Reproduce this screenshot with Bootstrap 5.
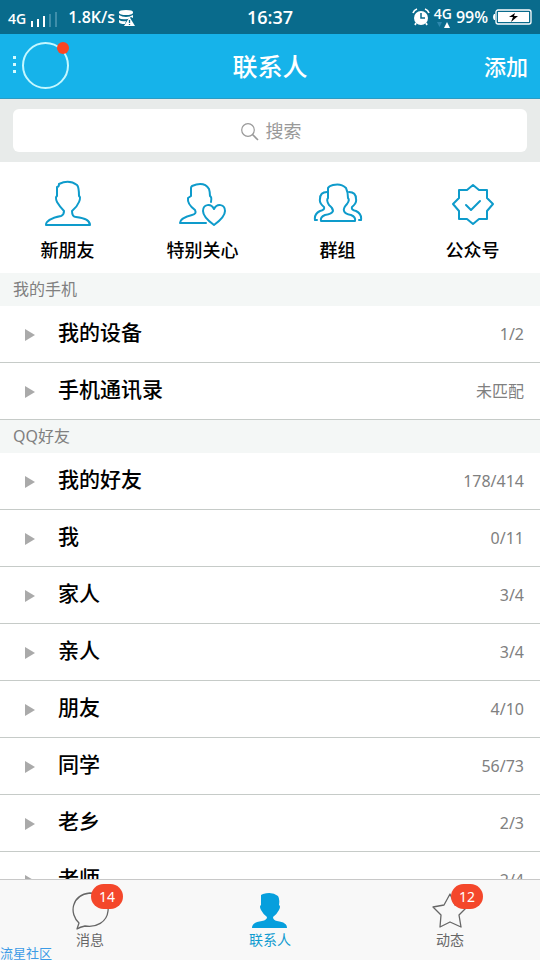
<!DOCTYPE html>
<html lang="zh-CN">
<head>
<meta charset="utf-8">
<meta name="viewport" content="width=device-width, initial-scale=1">
<title>联系人</title>
<link href="https://cdn.jsdelivr.net/npm/bootstrap@5.3.0/dist/css/bootstrap.min.css" rel="stylesheet">
<style>
  :root { --sky: #16b3ea; --line: #0e9bcb; --ink-soft: #808080; }
  body { font-family: "Noto Sans", "Noto Sans CJK SC", sans-serif; background: #fff; color: #000; }
  svg { display: block; flex: none; }
  .status-bar { background: #096b8c; height: 34px; font-family: "Open Sans", "Noto Sans", sans-serif; font-weight: 600; font-size: 16px; line-height: 24px; }
  .status-side { flex: 1 1 0; }
  .status-small { font-size: 14px; line-height: 16px; }
  .status-clock { font-size: 18px; }
  .title-bar { background: var(--sky); height: 65px; border-bottom: 1px solid #2b9cc4; padding: 0 12px; }
  .title-side { flex: 1 1 0; }
  .title-bar h1 { font-size: 25px; line-height: 36px; font-weight: 500; }
  .add-btn { font-size: 22px; line-height: 32px; font-weight: 500; }
  .search-strip { background: #e8ebea; padding: 10px 13px; }
  .search-field, .search-field:focus { height: 43px; border: 0; border-radius: 6px; font-size: 18px; padding: 0 0 0 43px; color: #666; background: #fff; }
  .search-field::placeholder { color: #999; opacity: 1; }
  .search-icon { left: calc(50% - 29px); top: 14px; }
  .shortcuts { height: 111px; padding-top: 15px; }
  .shortcuts a { font-size: 18px; line-height: 26px; font-weight: 500; }
  .shortcuts svg { fill: none; stroke: var(--line); stroke-width: 2; stroke-linejoin: round; stroke-linecap: round; }
  .section-title { background: #f4f7f6; color: var(--ink-soft); height: 33px; font-size: 16px; line-height: 33px; padding-left: 13px; font-weight: 400; }
  .contact-list { min-height: 0; }
  .group-row { height: 57px; border-bottom: 1px solid #c6cbc8; padding: 0 16px 4px 25px; background: #fff; color: #000; }
  .group-row svg { margin: 5px 23px 0 0; fill: #aaa; }
  .group-name { font-size: 21px; line-height: 30px; font-weight: 500; }
  .group-count { font-size: 16px; line-height: 24px; color: var(--ink-soft); margin-top: 3px; }
  .tab-bar { height: 81px; background: #f8f8f8; border-top: 1px solid #c8c8c8; padding-top: 11px; }
  .tab-bar a { font-size: 14px; line-height: 20px; color: #666; }
  .tab-bar a.active { color: #109bd0; }
  .tab-bar svg { fill: none; stroke: #666; stroke-width: 1.3; stroke-linejoin: round; }
  .tab-bar a.active svg { fill: #069fdd; stroke: none; }
  .tab-badge { left: 20px; top: -7px; width: 32px; height: 25px; border-radius: 13px; background: #f4472b; font-size: 14px; line-height: 25px; }
  .watermark { left: 0; bottom: 0; font-size: 13px; line-height: 14px; color: #3d9be6; }
</style>
</head>
<body>
<div class="vh-100 d-flex flex-column overflow-hidden position-relative">
  <div class="status-bar d-flex align-items-center text-white px-2 flex-shrink-0">
    <div class="status-side d-flex align-items-center">
      <span class="status-small mt-1">4G</span>
      <svg class="ms-1 mt-1" width="30" height="17" viewBox="0 0 30 17" stroke="#fff" stroke-width="2"><path d="M2 10v6M8 8v8M14 5v11"/><path d="M20 3v13M26 1v15" stroke="#3f8eaa"/></svg>
      <span class="ms-2">1.8K/s</span>
      <svg class="ms-1" width="16" height="17" viewBox="0 0 16 17"><path fill="#fff" d="M0 3Q0 1 7 1t7 2v1Q13 6 7 6T0 4zM0 6q3 2 7 2t7-2v3l-2-1-3 2Q2 11 0 9zM0 11q3 2 7 1l-1 3Q0 15 0 13z"/><path fill="#fff" d="M10.500 8l5.500 9H5z"/><path stroke="#096b8c" stroke-width="1.300" d="M10.500 11v3M10.500 15v1" fill="none"/></svg>
    </div>
    <span class="status-clock">16:37</span>
    <div class="status-side d-flex align-items-center justify-content-end">
      <svg width="18" height="18" viewBox="0 0 18 18"><circle cx="9" cy="10" r="7" fill="#fff"/><path d="M1 5Q2 2 5 1M13 1q3 1 4 4M4 15l-1 2M14 15l1 2" fill="none" stroke="#fff" stroke-width="1.700"/><path d="M9 5v5h4" stroke="#096b8c" stroke-width="1.500" fill="none"/></svg>
      <div class="status-small d-flex flex-column align-items-center ms-1">
        <span>4G</span>
        <svg width="14" height="6" viewBox="0 0 14 6"><path fill="#2d87ad" d="M1 0h5L3.500 5z"/><path fill="#fff" d="M8 6h6l-3-6z"/></svg>
      </div>
      <span class="ms-1">99%</span>
      <svg class="ms-1" width="40" height="16" viewBox="0 0 40 16"><path fill="#fff" d="M3 5v6H2Q0 8 2 5z"/><rect x="4" y="1" width="35" height="14" rx="2" fill="none" stroke="#fff" stroke-width="1.300"/><path fill="#fff" d="M6 3h31v10H6z"/><path d="M23 4l-6 4h4l-2 5 7-6h-4z"/></svg>
    </div>
  </div>

  <header class="title-bar d-flex align-items-center text-white flex-shrink-0">
    <div class="title-side">
      <button type="button" class="btn p-0 border-0" aria-label="我的资料">
        <svg width="60" height="50" viewBox="4 0 60 50"><path fill="#d4fbff" d="M5 15h3v3H5zM5 22h3v3H5zM5 29h3v3H5z"/><circle cx="37.500" cy="24.500" r="22.500" fill="none" stroke="#c4f7ff" stroke-width="2"/><circle cx="55" cy="7" r="6" fill="#fc4523"/></svg>
      </button>
    </div>
    <h1 class="m-0">联系人</h1>
    <div class="title-side text-end"><button type="button" class="add-btn btn p-0 border-0 text-white">添加</button></div>
  </header>

  <form class="search-strip flex-shrink-0" role="search">
    <div class="position-relative">
      <input type="search" class="search-field form-control text-center" placeholder="搜索" aria-label="搜索">
      <svg class="search-icon position-absolute" width="18" height="18" viewBox="0 0 18 18" fill="none" stroke="#999" stroke-width="1.200"><circle cx="7" cy="7" r="6.300"/><path d="M11.500 11.500L17 17" stroke-width="1.600"/></svg>
    </div>
  </form>

  <nav class="shortcuts d-flex text-center flex-shrink-0" aria-label="快捷入口">
    <a href="#new" class="col d-flex flex-column align-items-center text-decoration-none text-black">
      <svg width="50" height="60" viewBox="0 0 50 60"><path d="M16 7Q26 2 34 8Q36 10 36 19Q38 20 36 25Q34 30 29 34Q29 40 33 40C42 41 47 44 47 48H3C3 44 8 41 18 39Q21 38 21 34Q17 30 14 25Q12 20 14 19V10Q16 10 16 7z"/></svg>
      <span>新朋友</span>
    </a>
    <a href="#special" class="col d-flex flex-column align-items-center text-decoration-none text-black">
      <svg width="50" height="60" viewBox="0 0 50 60"><path d="M28 46H2C2 42 6 40 14 38Q19 37 17 33Q9 27 10 21L13 19V11Q13 10 14 9Q26 4 31 12Q32 15 32 19Q34 20 33 25"/><path d="M36 48Q25 40 25 34C25 27 33 26 36 32C39 26 47 27 47 34Q47 40 36 48z"/></svg>
      <span>特别关心</span>
    </a>
    <a href="#groups" class="col d-flex flex-column align-items-center text-decoration-none text-black">
      <svg width="50" height="60" viewBox="0 0 50 60"><path d="M15 11Q16 9 20 8Q28 6 33 11Q35 15 35 21Q37 23 34 27Q30 31 31 34Q32 37 38 38Q43 40 42 44H8Q7 40 12 38Q19 37 20 34Q20 31 16 28Q13 23 15 21z"/><path d="M14 15Q7 15 7 22Q6 26 11 30Q12 33 7 34Q1 37 2 43h2M36 15Q43 15 43 22Q44 26 39 30Q38 33 43 34Q49 37 48 43h-2"/></svg>
      <span>群组</span>
    </a>
    <a href="#official" class="col d-flex flex-column align-items-center text-decoration-none text-black">
      <svg width="50" height="60" viewBox="0 0 50 60"><path d="M25 8L31 13H39V21L45 27L39 34V42H31L25 47L19 42H11V34L5 27L11 21V13H19z"/><path d="M18 28l5 5 9-9"/></svg>
      <span>公众号</span>
    </a>
  </nav>

  <main class="contact-list flex-grow-1 overflow-hidden">
    <h2 class="section-title m-0">我的手机</h2>
    <button type="button" class="group-row btn rounded-0 border-top-0 border-start-0 border-end-0 w-100 d-flex align-items-center text-start"><svg width="10" height="12" viewBox="0 0 10 12"><path d="M0 0l10 6-10 6z"/></svg><span class="group-name flex-grow-1">我的设备</span><span class="group-count">1/2</span></button>
    <button type="button" class="group-row btn rounded-0 border-top-0 border-start-0 border-end-0 w-100 d-flex align-items-center text-start"><svg width="10" height="12" viewBox="0 0 10 12"><path d="M0 0l10 6-10 6z"/></svg><span class="group-name flex-grow-1">手机通讯录</span><span class="group-count">未匹配</span></button>
    <h2 class="section-title m-0">QQ好友</h2>
    <button type="button" class="group-row btn rounded-0 border-top-0 border-start-0 border-end-0 w-100 d-flex align-items-center text-start"><svg width="10" height="12" viewBox="0 0 10 12"><path d="M0 0l10 6-10 6z"/></svg><span class="group-name flex-grow-1">我的好友</span><span class="group-count">178/414</span></button>
    <button type="button" class="group-row btn rounded-0 border-top-0 border-start-0 border-end-0 w-100 d-flex align-items-center text-start"><svg width="10" height="12" viewBox="0 0 10 12"><path d="M0 0l10 6-10 6z"/></svg><span class="group-name flex-grow-1">我</span><span class="group-count">0/11</span></button>
    <button type="button" class="group-row btn rounded-0 border-top-0 border-start-0 border-end-0 w-100 d-flex align-items-center text-start"><svg width="10" height="12" viewBox="0 0 10 12"><path d="M0 0l10 6-10 6z"/></svg><span class="group-name flex-grow-1">家人</span><span class="group-count">3/4</span></button>
    <button type="button" class="group-row btn rounded-0 border-top-0 border-start-0 border-end-0 w-100 d-flex align-items-center text-start"><svg width="10" height="12" viewBox="0 0 10 12"><path d="M0 0l10 6-10 6z"/></svg><span class="group-name flex-grow-1">亲人</span><span class="group-count">3/4</span></button>
    <button type="button" class="group-row btn rounded-0 border-top-0 border-start-0 border-end-0 w-100 d-flex align-items-center text-start"><svg width="10" height="12" viewBox="0 0 10 12"><path d="M0 0l10 6-10 6z"/></svg><span class="group-name flex-grow-1">朋友</span><span class="group-count">4/10</span></button>
    <button type="button" class="group-row btn rounded-0 border-top-0 border-start-0 border-end-0 w-100 d-flex align-items-center text-start"><svg width="10" height="12" viewBox="0 0 10 12"><path d="M0 0l10 6-10 6z"/></svg><span class="group-name flex-grow-1">同学</span><span class="group-count">56/73</span></button>
    <button type="button" class="group-row btn rounded-0 border-top-0 border-start-0 border-end-0 w-100 d-flex align-items-center text-start"><svg width="10" height="12" viewBox="0 0 10 12"><path d="M0 0l10 6-10 6z"/></svg><span class="group-name flex-grow-1">老乡</span><span class="group-count">2/3</span></button>
    <button type="button" class="group-row btn rounded-0 border-top-0 border-start-0 border-end-0 w-100 d-flex align-items-center text-start"><svg width="10" height="12" viewBox="0 0 10 12"><path d="M0 0l10 6-10 6z"/></svg><span class="group-name flex-grow-1">老师</span><span class="group-count">2/4</span></button>
  </main>

  <nav class="tab-bar d-flex flex-shrink-0" aria-label="主导航">
    <a href="#messages" class="col d-flex flex-column align-items-center text-decoration-none">
      <span class="position-relative">
        <svg width="38" height="39" viewBox="0 0 38 39"><path d="M6 38L8 32C-2 23 0 4 19 2C34 2 38 13 37 20C36 31 25 37 14 35Q9 36 6 38z"/></svg>
        <span class="tab-badge position-absolute text-white text-center">14</span>
      </span>
      <span>消息</span>
    </a>
    <a href="#contacts" class="active col d-flex flex-column align-items-center text-decoration-none" aria-current="page">
      <svg width="38" height="39" viewBox="0 0 38 39"><path d="M10 4L12 3Q21 0 27 5Q29 8 28 14Q30 15 28 19Q26 23 22 26Q22 29 26 30C33 31 36 33 36 37H1C1 33 4 31 11 30Q16 29 16 26Q12 23 10 19Q8 15 10 14z"/></svg>
      <span>联系人</span>
    </a>
    <a href="#moments" class="col d-flex flex-column align-items-center text-decoration-none">
      <span class="position-relative">
        <svg width="38" height="39" viewBox="0 0 38 39"><path d="M19 3L24 14L36 16L28 24L30 36L19 31L9 36L10 24L2 16L13 14z"/></svg>
        <span class="tab-badge position-absolute text-white text-center">12</span>
      </span>
      <span>动态</span>
    </a>
  </nav>
  <span class="watermark position-absolute">流星社区</span>
</div>
<script src="https://cdn.jsdelivr.net/npm/bootstrap@5.3.0/dist/js/bootstrap.bundle.min.js"></script>
</body>
</html>
